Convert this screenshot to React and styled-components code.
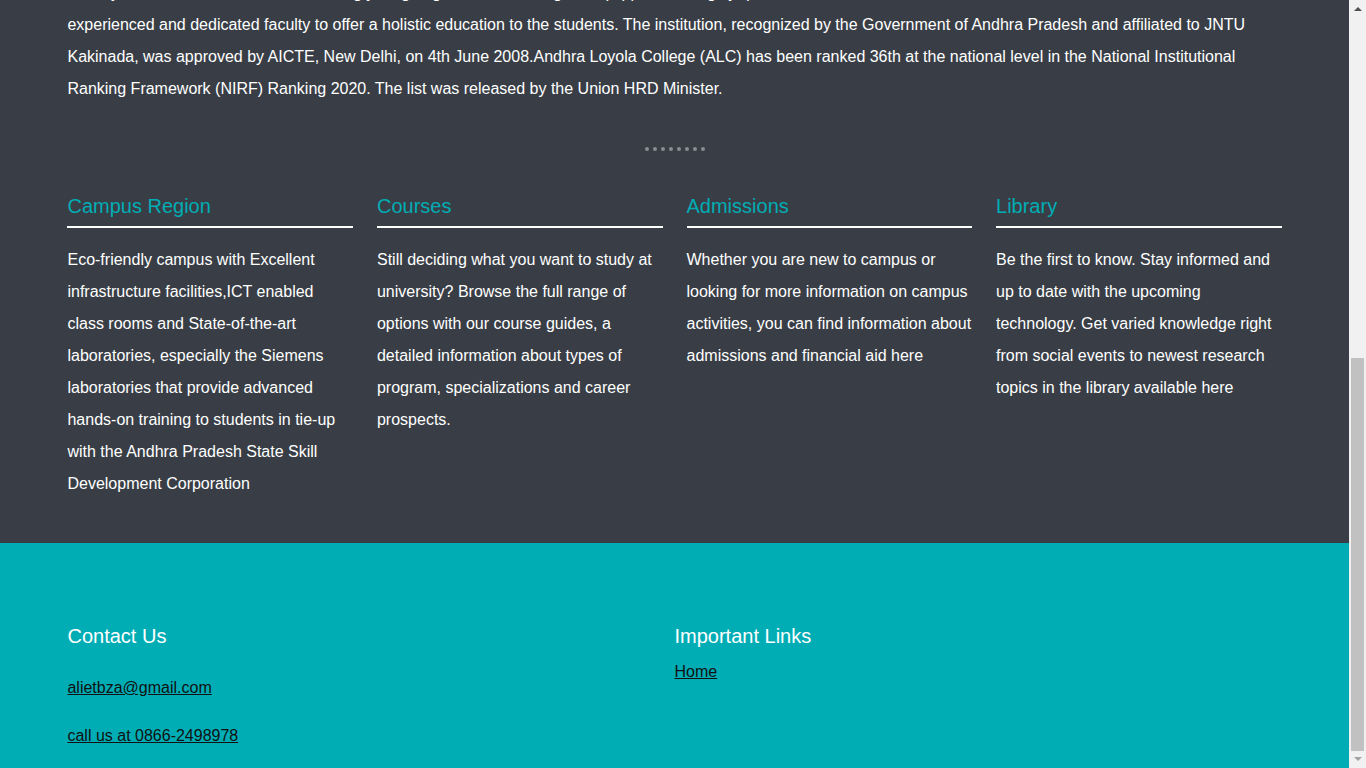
import React, { useLayoutEffect, useEffect } from 'react'
import styled, { createGlobalStyle } from 'styled-components'

const GlobalStyle = createGlobalStyle`
  html, body {
    margin: 0;
    padding: 0;
  }
  body {
    background: #393e46;
    font-family: "Liberation Sans", Arial, sans-serif;
    color: #fff;
  }
`

const Page = styled.div`
  margin-right: 17px;
  overflow-x: hidden;
`

const Nav = styled.nav`
  height: 64px;
  background: #222831;
  display: flex;
  align-items: center;
  justify-content: space-between;
  padding: 0 5%;
`

const Brand = styled.div`
  color: #00adb5;
  font-size: 24px;
  font-weight: 700;
`

const NavLinks = styled.div`
  display: flex;
  gap: 28px;
  font-size: 16px;
  color: #eeeeee;
`

const Hero = styled.header`
  height: 420px;
  display: flex;
  flex-direction: column;
  align-items: center;
  justify-content: center;
  gap: 12px;
  background: #222831;
  h1 {
    margin: 0;
    font-size: 40px;
    font-weight: 400;
    color: #00adb5;
  }
  p {
    margin: 0;
    font-size: 18px;
    color: #eeeeee;
  }
`

const Section = styled.section`
  background: #393e46;
  padding: 40px 0 43px;
`

const Inner = styled.div`
  width: 90%;
  margin: 0 auto;
`

const SectionTitle = styled.h2`
  margin: 0 0 20px;
  font-size: 28px;
  font-weight: 400;
  color: #00adb5;
`

const Intro = styled.p`
  margin: 0;
  font-size: 16px;
  line-height: 32px;
  color: #fff;
`

const Dots = styled.div`
  display: flex;
  justify-content: center;
  gap: 4px;
  margin: 42px 0 43px;
`

const Dot = styled.span`
  width: 4px;
  height: 4px;
  border-radius: 50%;
  background: #8a8d92;
`

const Columns = styled.div`
  display: grid;
  grid-template-columns: repeat(4, 1fr);
  gap: 24px;
`

const ColTitle = styled.h3`
  margin: 0;
  padding-bottom: 8px;
  border-bottom: 2px solid #fff;
  font-size: 20px;
  font-weight: 400;
  line-height: 24px;
  color: #00adb5;
`

const ColText = styled.p`
  margin: 16px 0 0;
  font-size: 16px;
  line-height: 32px;
  color: #fff;
`

const Footer = styled.footer`
  background: #00adb5;
  padding: 81px 0 23px;
`

const FooterGrid = styled.div`
  width: 90%;
  margin: 0 auto;
  display: grid;
  grid-template-columns: 1fr 1fr;
`

const FooterCol = styled.div`
  display: flex;
  flex-direction: column;
  align-items: flex-start;
`

const FooterTitle = styled.h3`
  margin: 0;
  font-size: 20px;
  font-weight: 400;
  line-height: 24px;
  color: #fff;
`

const FooterLink = styled.a`
  display: block;
  margin-top: ${p => p.$gap}px;
  font-size: 16px;
  line-height: 18px;
  color: #111;
  text-decoration: underline;
`

const ScrollTrack = styled.div`
  position: fixed;
  top: 0;
  right: 0;
  width: 17px;
  height: 100vh;
  background: #f1f1f1;
`

const Arrow = styled.span`
  position: absolute;
  left: 5px;
  ${p => (p.$down ? 'bottom: 7px;' : 'top: 7px;')}
  width: 0;
  height: 0;
  border-left: 4px solid transparent;
  border-right: 4px solid transparent;
  ${p => (p.$down ? 'border-top: 4px solid #a3a3a3;' : 'border-bottom: 4px solid #505050;')}
`

const Thumb = styled.div`
  position: absolute;
  left: 2px;
  top: 358px;
  width: 13px;
  height: 393px;
  background: #c1c1c1;
`

const cards = [
  {
    title: 'Campus Region',
    text: 'Eco-friendly campus with Excellent infrastructure facilities,ICT enabled class rooms and State-of-the-art laboratories, especially the Siemens laboratories that provide advanced hands-on training to students in tie-up with the Andhra Pradesh State Skill Development Corporation',
  },
  {
    title: 'Courses',
    text: 'Still deciding what you want to study at university? Browse the full range of options with our course guides, a detailed information about types of program, specializations and career prospects.',
  },
  {
    title: 'Admissions',
    text: 'Whether you are new to campus or looking for more information on campus activities, you can find information about admissions and financial aid here',
  },
  {
    title: 'Library',
    text: 'Be the first to know. Stay informed and up to date with the upcoming technology. Get varied knowledge right from social events to newest research topics in the library available here',
  },
]

export default function App() {
  useLayoutEffect(() => {
    window.scrollTo(0, document.documentElement.scrollHeight)
  }, [])
  useEffect(() => {
    window.scrollTo(0, document.documentElement.scrollHeight)
  }, [])

  return (
    <>
      <GlobalStyle />
      <Page>
        <Nav>
          <Brand>ALIET</Brand>
          <NavLinks>
            <span>Home</span>
            <span>About</span>
            <span>Departments</span>
            <span>Contact</span>
          </NavLinks>
        </Nav>
        <Hero>
          <h1>Andhra Loyola Institute of Engineering and Technology</h1>
          <p>Vijayawada, Andhra Pradesh</p>
        </Hero>
        <Section>
          <Inner>
            <SectionTitle>About Us</SectionTitle>
            <Intro>
              Andhra Loyola Institute of Engineering and Technology (ALIET) is a Jesuit institution sponsored by Andhra Loyola College, Vijayawada, run by the Society of Jesus.
              Started in the year 2008 with the motto of forming young engineers, the college is equipped with highly qualified,
              <br />
              experienced and dedicated faculty to offer a holistic education to the students. The institution, recognized by the Government of Andhra Pradesh and affiliated to JNTU
              Kakinada, was approved by AICTE, New Delhi, on 4th June 2008.Andhra Loyola College (ALC) has been ranked 36th at the national level in the National Institutional
              Ranking Framework (NIRF) Ranking 2020. The list was released by the Union HRD Minister.
            </Intro>
            <Dots>
              {Array.from({ length: 8 }).map((_, i) => (
                <Dot key={i} />
              ))}
            </Dots>
            <Columns>
              {cards.map(c => (
                <div key={c.title}>
                  <ColTitle>{c.title}</ColTitle>
                  <ColText>{c.text}</ColText>
                </div>
              ))}
            </Columns>
          </Inner>
        </Section>
        <Footer>
          <FooterGrid>
            <FooterCol>
              <FooterTitle>Contact Us</FooterTitle>
              <FooterLink $gap={31} href="mailto:alietbza@gmail.com">alietbza@gmail.com</FooterLink>
              <FooterLink $gap={30} href="tel:08662498978">call us at 0866-2498978</FooterLink>
            </FooterCol>
            <FooterCol>
              <FooterTitle>Important Links</FooterTitle>
              <FooterLink $gap={15} href="#">Home</FooterLink>
            </FooterCol>
          </FooterGrid>
        </Footer>
      </Page>
      <ScrollTrack>
        <Arrow />
        <Thumb />
        <Arrow $down />
      </ScrollTrack>
    </>
  )
}
